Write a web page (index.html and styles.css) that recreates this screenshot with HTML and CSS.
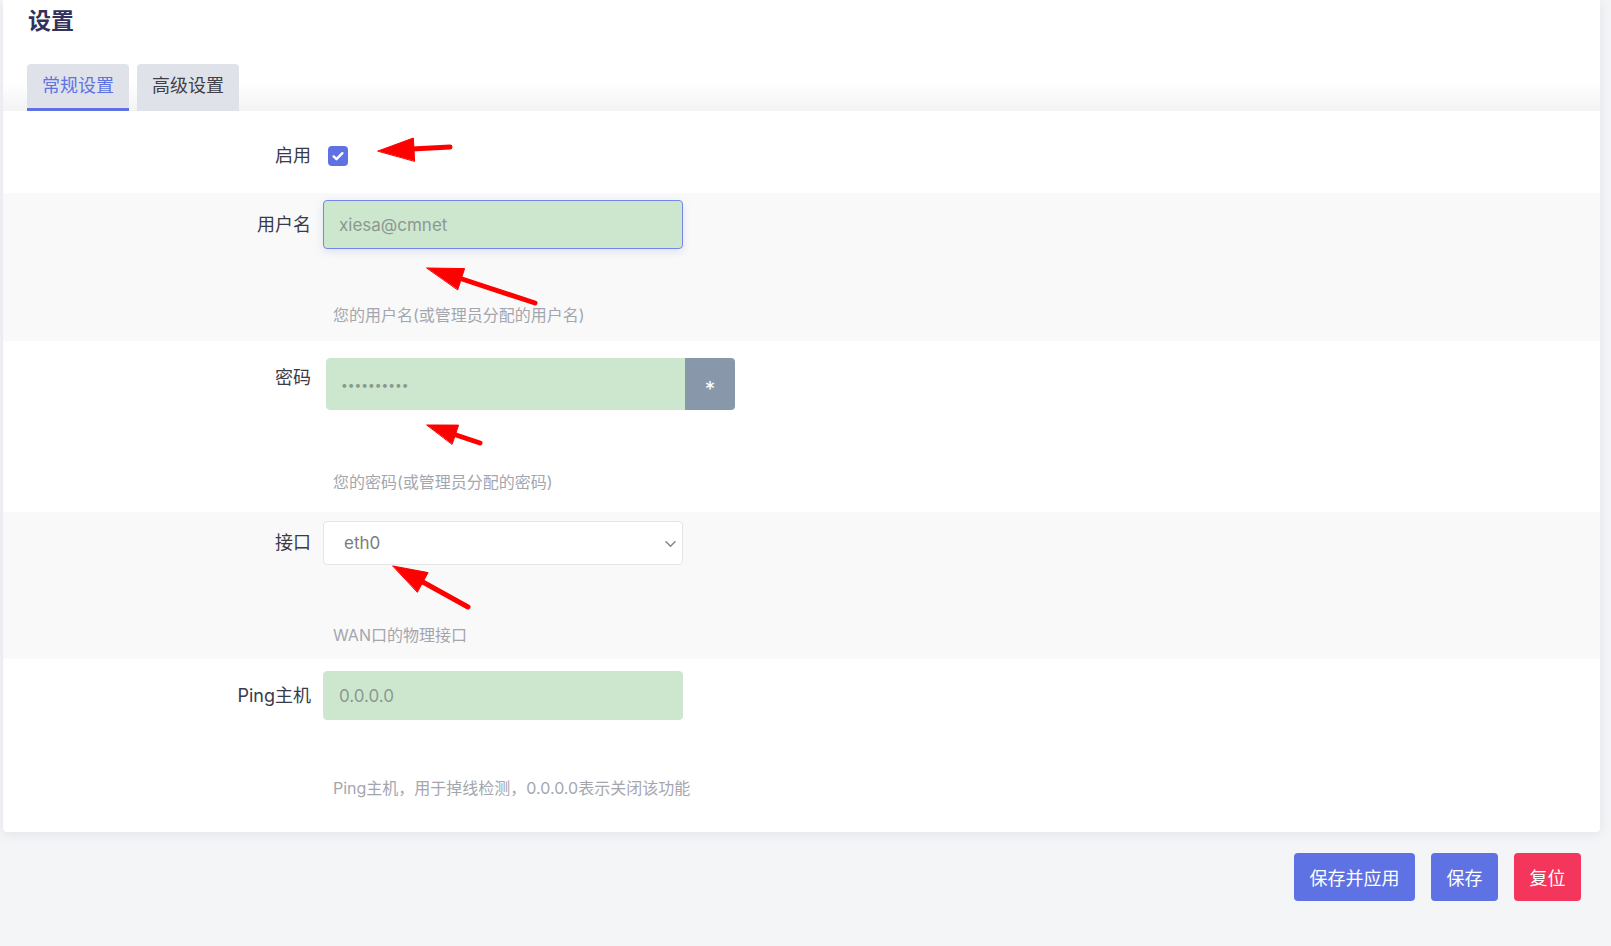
FILE: index.html
```html
<!DOCTYPE html>
<html lang="zh-CN">
<head>
    <meta charset="UTF-8">
    <meta name="viewport" content="width=device-width, initial-scale=1.0">
    <title>设置</title>
    <link rel="stylesheet" href="styles.css">
</head>
<body>
    <div class="main">
        <!-- Карточка настроек -->
        <div class="card">
            <div class="card-head">
                <h2 class="title">设置</h2>
                <ul class="tabs">
                    <li class="tab tab-active">常规设置</li>
                    <li class="tab">高级设置</li>
                </ul>
            </div>

            <div class="row row-enable">
                <label class="label">启用</label>
                <div class="field">
                    <span class="checkbox">
                        <svg width="20" height="20" viewBox="0 0 20 20"><path d="M5.6 10.4l2.9 2.8 5.9-6" fill="none" stroke="#fff" stroke-width="2.4" stroke-linecap="round" stroke-linejoin="round"/></svg>
                    </span>
                </div>
            </div>

            <div class="row row-alt row-user">
                <label class="label" for="username">用户名</label>
                <div class="field">
                    <input id="username" class="input input-focus" type="text" value="xiesa@cmnet">
                </div>
                <div class="desc">您的用户名(或管理员分配的用户名)</div>
            </div>

            <div class="row row-pass">
                <label class="label label-top" for="password">密码</label>
                <div class="field password">
                    <input id="password" class="input input-pass" type="password" value="1234567890">
                    <button class="reveal" type="button">*</button>
                </div>
                <div class="desc">您的密码(或管理员分配的密码)</div>
            </div>

            <div class="row row-alt row-iface">
                <label class="label" for="iface">接口</label>
                <div class="field select-wrap">
                    <select id="iface" class="select">
                        <option>eth0</option>
                        <option>eth1</option>
                    </select>
                    <svg class="chevron" width="11" height="6" viewBox="0 0 11 6"><path d="M1 0.8l4.5 4.4 4.5-4.4" fill="none" stroke="#858585" stroke-width="1.5" stroke-linecap="round" stroke-linejoin="round"/></svg>
                </div>
                <div class="desc">WAN口的物理接口</div>
            </div>

            <div class="row row-ping">
                <label class="label" for="ping">Ping主机</label>
                <div class="field">
                    <input id="ping" class="input" type="text" value="0.0.0.0">
                </div>
                <div class="desc">Ping主机，用于掉线检测，0.0.0.0表示关闭该功能</div>
            </div>
        </div>

        <!-- Кнопки -->
        <div class="actions">
            <button class="btn btn-primary" type="button">保存并应用</button>
            <button class="btn btn-primary" type="button">保存</button>
            <button class="btn btn-danger" type="button">复位</button>
        </div>
    </div>

    <!-- Красные стрелки поверх формы -->
    <svg class="marks" width="1611" height="946" viewBox="0 0 1611 946">
        <g fill="#ff0000" stroke="#ff0000" stroke-linecap="round" stroke-linejoin="round">
            <line x1="412" y1="149" x2="450" y2="147" stroke-width="5"/>
            <polygon points="378,151 413.4,138 414.6,161" stroke-width="1"/>

            <line x1="459" y1="278" x2="535" y2="303" stroke-width="5"/>
            <polygon points="427,268 464.6,268.6 457.8,289.6" stroke-width="1"/>

            <line x1="453" y1="434" x2="480" y2="443" stroke-width="5"/>
            <polygon points="427,425 458.6,425.1 452.2,444.1" stroke-width="1"/>

            <line x1="421" y1="581" x2="468" y2="607" stroke-width="5"/>
            <polygon points="393,566 428.1,572.6 417.5,592" stroke-width="1"/>
        </g>
    </svg>
</body>
</html>
```

FILE: styles.css
```css
body {
    margin: 0;
    background-color: #f4f5f7;
    font-family: "Inter", "Noto Sans CJK SC", sans-serif;
    color: #3a3a48;
}

.main {
    padding: 0 11px 0 3px;
}

.card {
    background-color: #fff;
    border-radius: 0 0 4px 4px;
    box-shadow: 0 2px 12px rgba(136, 152, 170, 0.18);
}

.card-head {
    padding: 6px 0 0 24px;
    background: linear-gradient(to bottom, #fff 0, #fff 82px, #f3f3f4 111px);
}

.title {
    margin: 0 0 0 1px;
    font-size: 23px;
    line-height: 30px;
    font-weight: bold;
    color: #32325d;
}

.tabs {
    display: flex;
    gap: 8px;
    margin: 28px 0 0;
    padding: 0;
    list-style: none;
}

.tab {
    width: 102px;
    height: 44px;
    line-height: 44px;
    text-align: center;
    font-size: 18px;
    color: #404048;
    background-color: #dfe3e9;
    border-radius: 4px 4px 0 0;
    border-bottom: 3px solid transparent;
}

.tab-active {
    color: #5e72e4;
    border-bottom-color: #5e72e4;
}

/* Строки формы */
.row {
    display: grid;
    grid-template-columns: 308px auto;
    column-gap: 12px;
    align-items: center;
    justify-content: start;
}

.row-alt {
    background-color: #f9f9f9;
}

.label {
    text-align: right;
    font-size: 18px;
    line-height: 24px;
    color: #3a3a48;
}

.label-top {
    align-self: start;
    padding-top: 8px;
}

.desc {
    grid-column: 2;
    padding-left: 10px;
    font-size: 16px;
    line-height: 20px;
    color: #a4a6ae;
}

.row-enable {
    padding: 33px 0 25px;
}

.row-user {
    padding: 7px 0 16px;
}

.row-user .desc {
    margin-top: 56px;
}

.row-pass {
    padding: 17px 0 20px;
}

.row-pass .desc {
    margin-top: 62px;
}

.row-iface {
    padding: 9px 0 14px;
}

.row-iface .desc {
    margin-top: 60px;
}

.row-ping {
    padding: 12px 0 34px;
}

.row-ping .desc {
    margin-top: 58px;
}

/* Поля */
.checkbox {
    display: block;
    width: 20px;
    height: 20px;
    margin-left: 5px;
    border-radius: 4px;
    background-color: #5e72e4;
}

.checkbox svg {
    display: block;
}

.input {
    box-sizing: border-box;
    width: 360px;
    height: 49px;
    padding: 0 15px;
    font-family: inherit;
    font-size: 17px;
    color: #8c9892;
    background-color: #cde7cf;
    border: 1px solid #cde7cf;
    border-radius: 4px;
    outline: none;
}

.input-focus {
    border-color: #7486e6;
    box-shadow: 0 3px 8px rgba(94, 114, 228, 0.16);
}

.password {
    display: flex;
    margin-left: 3px;
}

.input-pass {
    width: 359px;
    height: 52px;
    padding-left: 14px;
    font-size: 12px;
    letter-spacing: 0;
    color: #889a8c;
    border-radius: 4px 0 0 4px;
}

.reveal {
    width: 50px;
    height: 52px;
    border: none;
    border-radius: 0 4px 4px 0;
    background-color: #8898aa;
    color: #fff;
    font-family: inherit;
    font-size: 21px;
    padding: 10px 0 0;
}

.select-wrap {
    position: relative;
    width: 360px;
}

.select {
    box-sizing: border-box;
    width: 360px;
    height: 44px;
    padding: 0 20px;
    font-family: inherit;
    font-size: 17px;
    color: #7c7c7c;
    background-color: #fff;
    border: 1px solid #e4e5e7;
    border-radius: 4px;
    appearance: none;
    -webkit-appearance: none;
    outline: none;
}

.chevron {
    position: absolute;
    right: 7px;
    top: 20px;
}

/* Кнопки */
.actions {
    display: flex;
    justify-content: flex-end;
    gap: 16px;
    margin-top: 21px;
    padding-right: 19px;
}

.btn {
    height: 48px;
    padding: 0 15.5px;
    border: none;
    border-radius: 4px;
    font-family: inherit;
    font-size: 18px;
    color: #fff;
    cursor: pointer;
}

.btn-primary {
    background-color: #5e72e4;
}

.btn-danger {
    background-color: #f5365c;
}

.marks {
    position: absolute;
    top: 0;
    left: 0;
    pointer-events: none;
}
```
